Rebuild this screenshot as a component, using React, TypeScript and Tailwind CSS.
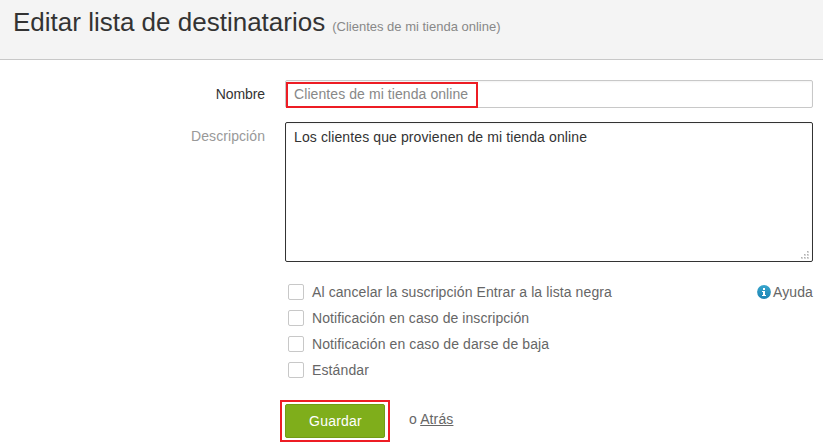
import { useState } from "react";

const OPTIONS = [
  {
    label: "Al cancelar la suscripción Entrar a la lista negra",
    className: "tracking-[0.1px]",
  },
  {
    label: "Notificación en caso de inscripción",
    className: "tracking-[0.07px]",
  },
  {
    label: "Notificación en caso de darse de baja",
    className: "tracking-[0.1px]",
  },
  { label: "Estándar", className: "tracking-[0.12px]" },
];

// grip dots in the bottom right corner of the textarea
const GRIP_DOTS = [
  [6, 0],
  [3, 3],
  [6, 3],
  [0, 6],
  [3, 6],
  [6, 6],
];

const ResizeGrip = () => (
  <svg
    width="9"
    height="9"
    viewBox="0 0 9 9"
    shapeRendering="crispEdges"
    className="pointer-events-none absolute right-[3px] bottom-[2px]"
  >
    {GRIP_DOTS.map(([x, y]) => (
      <g key={`${x}-${y}`}>
        <rect x={x} y={y} width="2" height="2" fill="#d6d6d6" />
        <rect x={x} y={y} width="1" height="1" fill="#b0b0b0" />
      </g>
    ))}
  </svg>
);

const InfoIcon = () => (
  <svg width="14" height="14" viewBox="0 0 14 14" className="shrink-0">
    <defs>
      <linearGradient id="info" x1="0" y1="0" x2="0" y2="1">
        <stop offset="0" stopColor="#38a5cc" />
        <stop offset="1" stopColor="#1c83b3" />
      </linearGradient>
    </defs>
    <circle cx="7" cy="7" r="6.9" fill="url(#info)" />
    <path d="M6 3h2v2H6zM5 6h3v4h1v1H5v-1h1V7H5z" fill="#fff" />
  </svg>
);

const Header = () => (
  <header className="flex h-[60px] items-baseline gap-[7px] border-b border-[#c8c8c8] bg-[#f4f4f4] pt-[7px] pl-[13px]">
    <h1 className="text-[26px] leading-[30px] text-[#333]">
      Editar lista de destinatarios
    </h1>
    <span className="text-[13px] text-[#888]">
      (Clientes de mi tienda online)
    </span>
  </header>
);

const App = () => {
  const [name, setName] = useState("Clientes de mi tienda online");
  const [description, setDescription] = useState(
    "Los clientes que provienen de mi tienda online",
  );
  const [checked, setChecked] = useState<string[]>([]);

  const toggle = (option: string) => {
    setChecked((prev) =>
      prev.includes(option)
        ? prev.filter((item) => item !== option)
        : [...prev, option],
    );
  };

  return (
    <div className="h-[445px] w-[823px] overflow-hidden bg-white font-['Liberation_Sans',Arial,sans-serif] text-sm text-[#666]">
      <Header />
      <form
        onSubmit={(e) => e.preventDefault()}
        className="grid grid-cols-[265px_528px] gap-x-5 pt-5"
      >
        <label
          htmlFor="name"
          className="pt-1 text-right tracking-[-0.1px] text-[#333]"
        >
          Nombre
        </label>
        <div className="relative h-[28px]">
          <input
            id="name"
            value={name}
            onChange={(e) => setName(e.target.value)}
            className="block h-full w-full rounded-[2px] border border-[#c8c8c8] px-2 tracking-[0.08px] text-[#888] shadow-[inset_0_1px_2px_#0000000d] outline-none"
          />
          <div className="pointer-events-none absolute top-[2px] left-[1px] h-[26px] w-[192px] border-2 border-[#ed1c24]" />
        </div>

        <label
          htmlFor="description"
          className="mt-[14px] pt-1 text-right tracking-[0.07px] text-[#999]"
        >
          Descripción
        </label>
        <div className="relative mt-[14px] h-[140px]">
          <textarea
            id="description"
            value={description}
            onChange={(e) => setDescription(e.target.value)}
            className="block h-full w-full resize-none rounded-[2px] border border-[#333] px-2 py-1 tracking-[0.11px] text-[#333] shadow-[inset_0_1px_2px_#0000000d] outline-none"
          />
          <ResizeGrip />
        </div>

        <div className="col-start-2 flex items-start justify-between pt-[17px] pl-[3px]">
          <div className="flex flex-col">
            {OPTIONS.map(({ label, className }) => (
              <label key={label} className="flex h-[26px] items-center gap-2">
                <input
                  type="checkbox"
                  checked={checked.includes(label)}
                  onChange={() => toggle(label)}
                  className="size-4 appearance-none rounded-[2px] border border-[#c8c8c8] bg-white checked:bg-[#7fae1b]"
                />
                <span className={className}>{label}</span>
              </label>
            ))}
          </div>
          <a
            href="#"
            className="flex h-[26px] w-[56px] items-center gap-[2px] tracking-[0.1px]"
          >
            <InfoIcon />
            Ayuda
          </a>
        </div>

        <div className="col-start-2 -ml-[5px] flex items-center gap-[19px] pt-[17px]">
          <div className="border-2 border-[#ed1c24] px-[3px] py-[2px]">
            <button
              type="submit"
              className="block h-[34px] w-[100px] rounded-[2px] border border-[#719c16] bg-[#7fae1b] pl-px text-sm tracking-[0.2px] text-white"
            >
              Guardar
            </button>
          </div>
          <span className="pb-1 tracking-[0.12px]">
            o{" "}
            <a href="#" className="underline">
              Atrás
            </a>
          </span>
        </div>
      </form>
    </div>
  );
};

export default App;
